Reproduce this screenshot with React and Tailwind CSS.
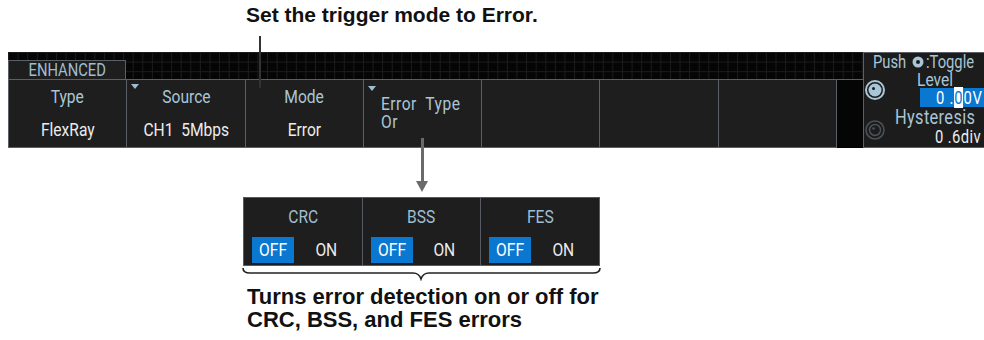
import React from "react";

const CELLS = [
  { label: "Type", value: "FlexRay" },
  { label: "Source", value: "CH1  5Mbps", menu: true },
  { label: "Mode", value: "Error" },
  { errorType: true },
  {},
  {},
  {},
];

const ERRORS = ["CRC", "BSS", "FES"];

// condensed screen lettering: Roboto squeezed horizontally
const N = ({ children, className = "" }) => (
  <span className={`inline-block scale-x-[0.82] whitespace-pre ${className}`}>{children}</span>
);

const Knob = ({ dim }) => (
  <svg width="20" height="20" viewBox="0 0 20 20">
    {dim ? (
      <>
        <circle cx="10" cy="10" r="9" fill="none" stroke="#4b5258" strokeWidth="1.5" />
        <circle cx="10" cy="10" r="5.5" fill="none" stroke="#4b5258" strokeWidth="1.5" />
        <circle cx="8.5" cy="8.5" r="1.3" fill="#4b5258" />
      </>
    ) : (
      <>
        <circle cx="10" cy="10" r="9" fill="none" stroke="#a9c6d6" strokeWidth="2" />
        <circle cx="10" cy="10" r="6.5" fill="#a9c6d6" />
        <circle cx="8.5" cy="8.5" r="1.5" fill="#1c1c1c" />
      </>
    )}
  </svg>
);

const Tri = ({ className }) => (
  <span
    className={`absolute left-[4px] w-0 h-0 border-l-[4px] border-r-[4px] border-t-[5px] border-l-transparent border-r-transparent border-t-[#9fbdd0] ${className}`}
  />
);

const Cell = ({ cell }) => (
  <div className="w-[118.3px] h-full border-r border-[#5a5f68] bg-[#1e1e1e] relative flex flex-col">
    {cell.menu && <Tri className="top-[4px]" />}
    {cell.errorType ? (
      <>
        <Tri className="top-[6px]" />
        <div className="pl-[17px] pt-[15px] text-[#a9c6d6] text-[19px] leading-[18px] tracking-[0.6px]">
          <div>
            <N className="origin-left">Error  Type</N>
          </div>
          <div>
            <N className="origin-left">Or</N>
          </div>
        </div>
      </>
    ) : (
      cell.label && (
        <>
          <div className="h-[35px] flex items-center justify-center text-[#a9c6d6] text-[19px]">
            <N>{cell.label}</N>
          </div>
          <div className="h-[34px] flex items-center justify-center text-[#ececec] text-[19px]">
            <N>{cell.value}</N>
          </div>
        </>
      )
    )}
  </div>
);

const App = () => {
  return (
    <div className="relative w-[984px] h-[340px] bg-white overflow-hidden">
      <div className="h-[52px] pl-[246px] pt-[3px] font-['Liberation_Sans',Arial,sans-serif] font-bold text-[21px] leading-[24px] text-[#111]">
        Set the trigger mode to Error.
      </div>

      {/* leader from caption to Mode */}
      <div className="absolute left-[259px] top-[36px] w-[2px] h-[52px] bg-[#333] rounded-b-full z-10" />

      <div className="flex h-[96px] font-['Roboto',sans-serif]">
        <div className="w-[8px] shrink-0" />
        <div className="w-[855px] shrink-0 flex flex-col bg-[#050505] bg-[linear-gradient(to_right,#1c1c1c_1px,transparent_1px),linear-gradient(to_bottom,#1c1c1c_1px,transparent_1px)] bg-[size:9.6px_9.6px]">
          <div className="h-[27px] flex items-end">
            <div className="w-[118px] h-[19px] border-l border-t border-r border-[#5a5f68] bg-[#1e1e1e] text-[#9fbdd0] text-[18px] leading-[18px] flex justify-center">
              <N>ENHANCED</N>
            </div>
          </div>
          <div className="h-[69px] flex">
            <div className="flex border-l border-t border-b border-[#5a5f68] h-full">
              {CELLS.map((cell, i) => (
                <Cell key={i} cell={cell} />
              ))}
            </div>
            <div className="flex-1 bg-[#050505] border-t border-[#5a5f68]" />
          </div>
        </div>

        <div className="w-[126px] shrink-0 bg-[#1c1c1c] border-l border-t border-b border-[#5a5f68] flex flex-col text-[18px]">
          <div className="h-[18px] leading-[16px] pl-[9px] text-[#a9c6d6] flex items-center">
            <N className="origin-left">Push</N>
            <svg width="12" height="12" viewBox="0 0 12 12" className="-ml-[1px] mr-[2px]">
              <circle cx="6" cy="6" r="5.5" fill="#a9c6d6" />
              <circle cx="6" cy="6" r="2" fill="#1c1c1c" />
            </svg>
            <N className="origin-left">:Toggle</N>
          </div>
          <div className="flex">
            <div className="w-[22px] shrink-0 flex flex-col pl-[1px] pt-[9px] gap-[20px]">
              <Knob />
              <Knob dim />
            </div>
            <div className="flex-1 flex flex-col">
              <div className="h-[17px] leading-[17px] pl-[31px] text-[19px] text-[#a9c6d6]">
                <N className="origin-left">Level</N>
              </div>
              <div className="h-[19px] ml-[34px] bg-[#0a78d0] text-white leading-[19px] pl-[16px] tracking-[1px]">
                <N className="origin-left">
                  0 .<span className="bg-white text-[#0a78d0]">0</span>0V
                </N>
              </div>
              <div className="h-[21px] leading-[21px] pl-[9px] text-[20px] tracking-[0.4px] text-[#a9c6d6]">
                <N className="origin-left">Hysteresis</N>
              </div>
              <div className="h-[17px] leading-[17px] pl-[49px] text-[#ececec] tracking-[0.5px]">
                <N className="origin-left">0 .6div</N>
              </div>
            </div>
          </div>
        </div>
      </div>

      {/* arrow to popup */}
      <div className="absolute left-[421px] top-[138px] w-[3px] h-[45px] bg-[#6a6a6a] z-10" />
      <div className="absolute left-[416px] top-[181px] w-0 h-0 border-l-[6.5px] border-r-[6.5px] border-t-[11px] border-l-transparent border-r-transparent border-t-[#6a6a6a]" />

      <div className="mt-[49px] ml-[243px] w-[357px] h-[69px] flex bg-[#1e1e1e] border border-[#555a63] font-['Roboto',sans-serif]">
        {ERRORS.map((e, i) => (
          <div key={e} className={`flex-1 flex flex-col ${i > 0 ? "border-l border-[#555a63]" : ""}`}>
            <div className="h-[39px] flex items-center justify-center text-[#9fbdd0] text-[19px]">
              <N>{e}</N>
            </div>
            <div className="flex items-center h-[26px] pl-[8px] text-[19px]">
              <div className="w-[42px] h-[26px] bg-[#0a78d0] text-white flex items-center justify-center">
                <N>OFF</N>
              </div>
              <div className="flex-1 text-center text-[#ececec] pr-[4px]">
                <N>ON</N>
              </div>
            </div>
          </div>
        ))}
      </div>

      <svg className="ml-[241px] mt-[1px]" width="362" height="14" viewBox="0 0 362 14">
        <path
          d="M2 1 Q2 6 9 6 L172 6 Q178 6 180 12 Q182 6 188 6 L352 6 Q359 6 359 1"
          fill="none"
          stroke="#222"
          strokeWidth="1.6"
        />
      </svg>

      <div className="ml-[247px] mt-[4px] font-['Liberation_Sans',Arial,sans-serif] font-bold text-[22px] leading-[23px] text-[#111]">
        <div>Turns error detection on or off for</div>
        <div>CRC, BSS, and FES errors</div>
      </div>
    </div>
  );
};

export default App;
